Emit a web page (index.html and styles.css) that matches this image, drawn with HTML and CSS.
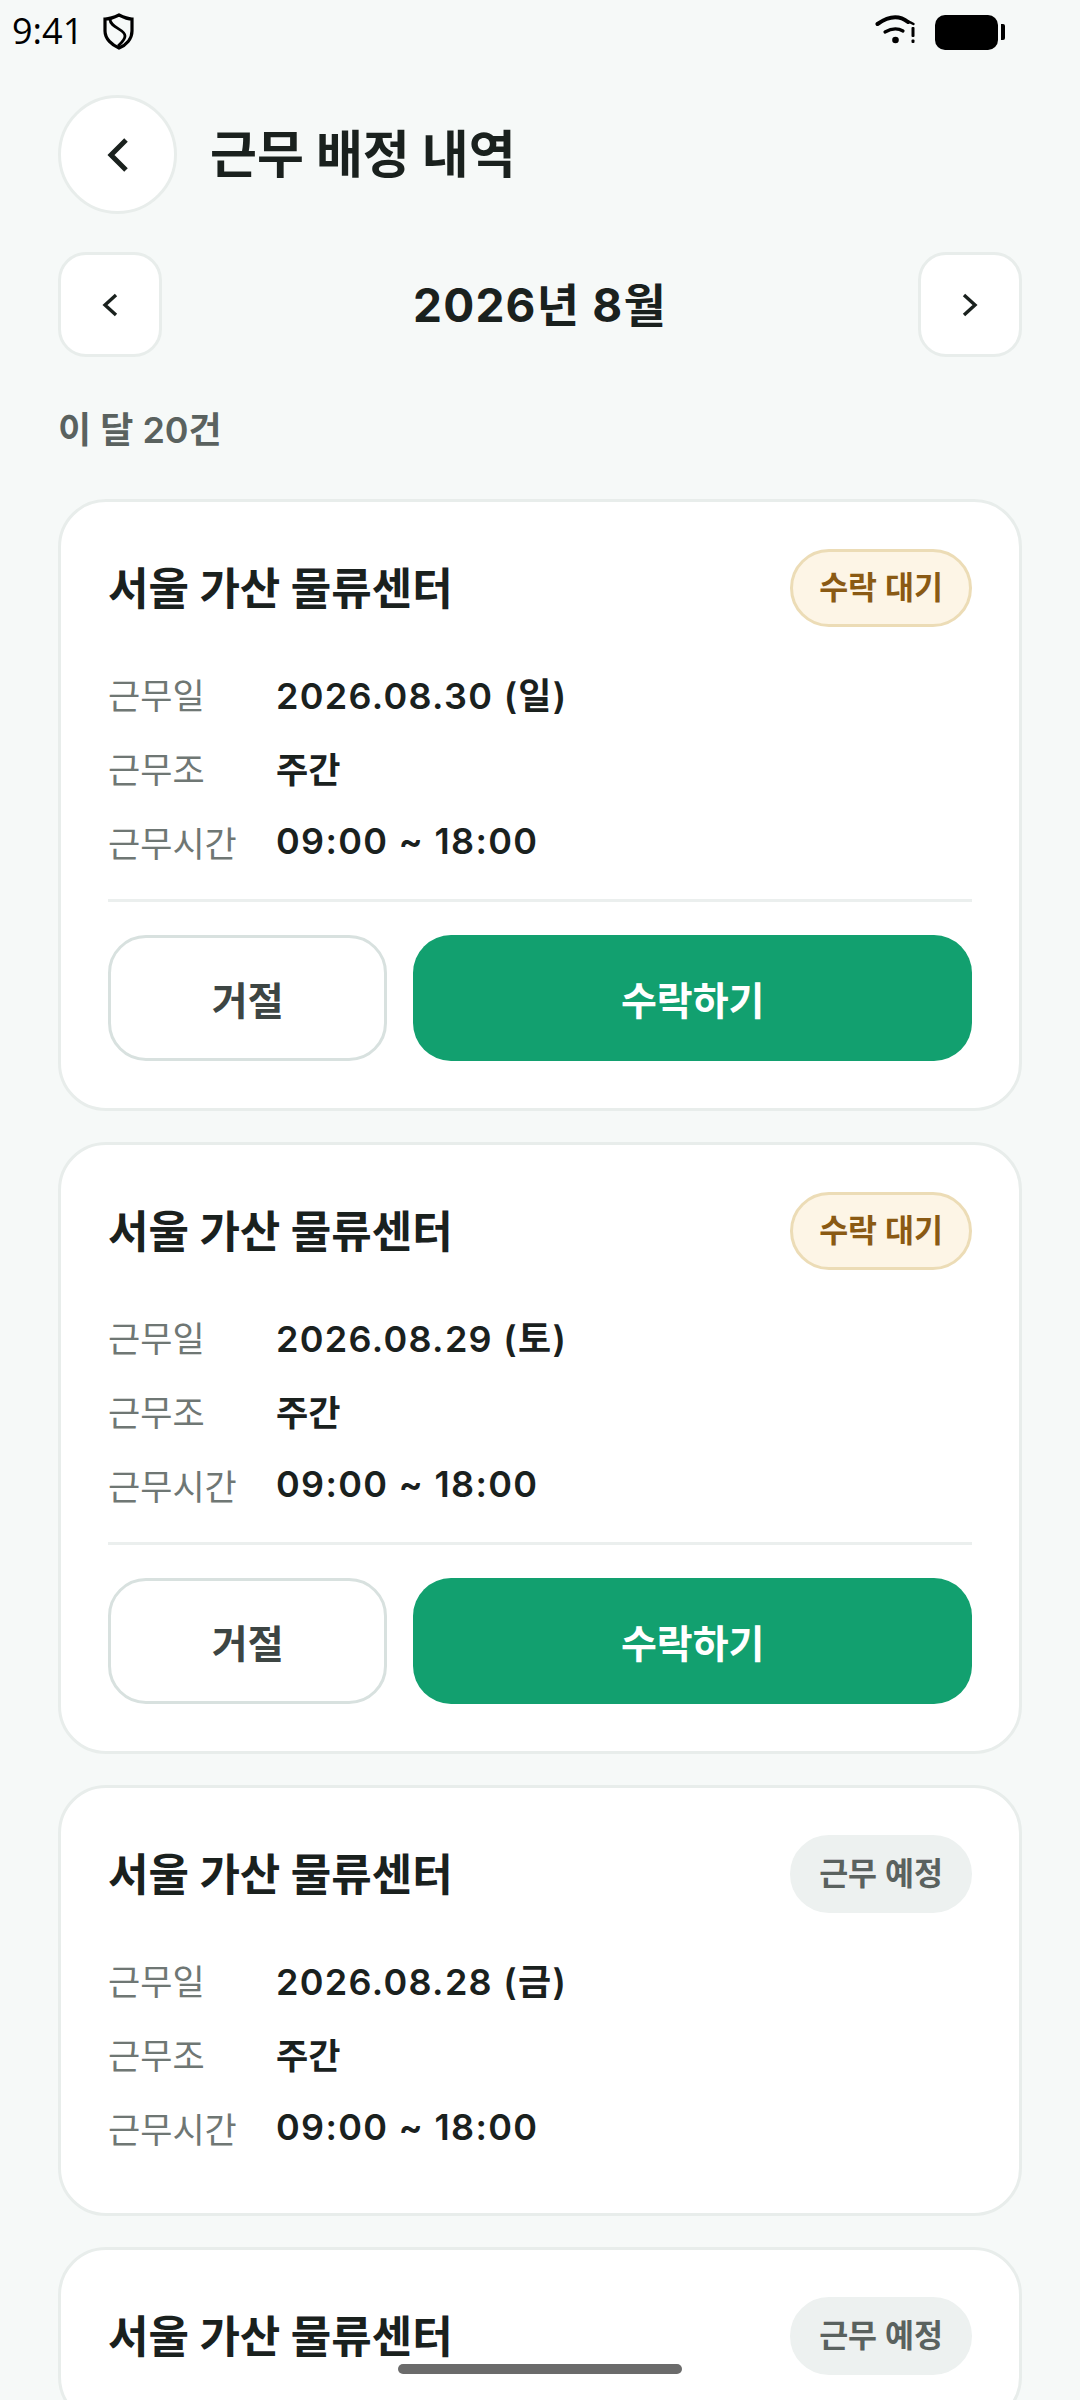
FILE: index.html
```html
<!DOCTYPE html>
<html lang="ko">
<head>
<meta charset="utf-8">
<title>근무 배정 내역</title>
<link rel="stylesheet" href="styles.css">
</head>
<body>
<div class="screen">
  <div class="status">
    <div class="status-left">
      <span class="clock">9:41</span>
      <svg class="shield" viewBox="0 0 40 44" fill="none" stroke="#000" stroke-width="3.2"><path d="M21 6 C25 8 30 10 34 10 V22 C34 30 28 36 21 39 C14 36 7 30 7 22 V10 C12 10 17 8 21 6Z"/><path d="M12 10 C12 19 27 20 27 27 C27 31 23 34 20 37" stroke-width="2.8"/></svg>
    </div>
    <div class="status-right">
      <svg class="wifi" viewBox="0 0 40 30" fill="none" stroke="#000" stroke-linecap="round"><path d="M2.5 9 Q20 -3.5 33 7" stroke-width="4"/><path d="M33 6.5 Q36 7.5 38.5 9" stroke-width="2.4"/><path d="M10 17 Q20 11.5 28 16" stroke-width="3.2"/><circle cx="20.5" cy="25" r="3.3" fill="#000" stroke="none"/><rect x="36.5" y="12" width="3" height="10" rx="1" fill="#000" stroke="none"/><rect x="36.5" y="24.5" width="3" height="3.4" rx="1" fill="#000" stroke="none"/></svg>
      <div class="battery"><span class="battery-body"></span><span class="battery-tip"></span></div>
    </div>
  </div>

  <header class="header">
    <button class="back" type="button" aria-label="뒤로"><svg class="chev-lg" viewBox="0 0 24 36" fill="none" stroke="#1a211e" stroke-width="5"><path d="M20 3 L5 18 L20 33"/></svg></button>
    <h1 class="title">근무 배정 내역</h1>
  </header>

  <div class="month">
    <button class="nav" type="button" aria-label="이전 달"><svg class="chev-sm" viewBox="0 0 16 24" fill="none" stroke="#1a211e" stroke-width="3.4"><path d="M14 2 L3 12 L14 22"/></svg></button>
    <div class="month-label">2026년 8월</div>
    <button class="nav" type="button" aria-label="다음 달"><svg class="chev-sm" viewBox="0 0 16 24" fill="none" stroke="#1a211e" stroke-width="3.4"><path d="M2 2 L13 12 L2 22"/></svg></button>
  </div>

  <div class="count">이 달 20건</div>

  <div class="list">
    <article class="card">
      <div class="card-head"><h2 class="site">서울 가산 물류센터</h2><span class="badge badge-wait">수락 대기</span></div>
      <dl class="rows">
        <div class="row"><dt>근무일</dt><dd class="num">2026.08.30 (일)</dd></div>
        <div class="row"><dt>근무조</dt><dd>주간</dd></div>
        <div class="row"><dt>근무시간</dt><dd class="num">09:00 ~ 18:00</dd></div>
      </dl>
      <div class="actions"><button class="btn btn-ghost" type="button">거절</button><button class="btn btn-primary" type="button">수락하기</button></div>
    </article>
    <article class="card">
      <div class="card-head"><h2 class="site">서울 가산 물류센터</h2><span class="badge badge-wait">수락 대기</span></div>
      <dl class="rows">
        <div class="row"><dt>근무일</dt><dd class="num">2026.08.29 (토)</dd></div>
        <div class="row"><dt>근무조</dt><dd>주간</dd></div>
        <div class="row"><dt>근무시간</dt><dd class="num">09:00 ~ 18:00</dd></div>
      </dl>
      <div class="actions"><button class="btn btn-ghost" type="button">거절</button><button class="btn btn-primary" type="button">수락하기</button></div>
    </article>
    <article class="card">
      <div class="card-head"><h2 class="site">서울 가산 물류센터</h2><span class="badge badge-plan">근무 예정</span></div>
      <dl class="rows">
        <div class="row"><dt>근무일</dt><dd class="num">2026.08.28 (금)</dd></div>
        <div class="row"><dt>근무조</dt><dd>주간</dd></div>
        <div class="row"><dt>근무시간</dt><dd class="num">09:00 ~ 18:00</dd></div>
      </dl>
    </article>
    <article class="card">
      <div class="card-head"><h2 class="site">서울 가산 물류센터</h2><span class="badge badge-plan">근무 예정</span></div>
    </article>
  </div>
  <div class="home"></div>
</div>
</body>
</html>
```

FILE: styles.css
```css
* { box-sizing: border-box; }
html, body { margin: 0; padding: 0; }
body {
  background: #f6f9f8;
  color: #1a211e;
  font-family: Inter, "Noto Sans CJK KR", sans-serif;
}
.screen { position: relative; width: 1080px; height: 2400px; overflow: hidden; }

.status { height: 62px; padding: 12px 75px 0 12px; display: flex; justify-content: space-between; align-items: flex-start; }
.status-left { display: flex; align-items: center; gap: 15px; height: 38px; }
.clock { font-family: "Open Sans", sans-serif; font-size: 36px; line-height: 38px; color: #000; }
.shield { width: 40px; height: 44px; }
.status-right { display: flex; align-items: center; gap: 20px; height: 38px; margin-top: 1px; }
.wifi { width: 40px; height: 30px; margin-top: -4px; }
.battery { display: flex; align-items: center; gap: 3px; }
.battery-body { width: 63px; height: 35px; border-radius: 10px; background: #000; }
.battery-tip { width: 4px; height: 16px; background: #000; border-radius: 0 2px 2px 0; }

.header { display: flex; align-items: center; gap: 33px; margin: 33px 58px 0; height: 119px; }
.back { width: 119px; height: 119px; border-radius: 50%; background: #fff; border: 3px solid #e8edeb; padding: 0; display: flex; align-items: center; justify-content: center; }
.chev-lg { width: 24px; height: 36px; }
.title { margin: 0; font-size: 51px; font-weight: 700; line-height: 60px; }

.month { display: flex; justify-content: space-between; align-items: center; margin: 38px 58px 0; height: 105px; }
.nav { width: 104px; height: 105px; border-radius: 28px; background: #fff; border: 3px solid #e8edeb; padding: 0; display: flex; align-items: center; justify-content: center; }
.chev-sm { width: 16px; height: 24px; }
.month-label { font-size: 46px; font-weight: 700; line-height: 52px; letter-spacing: 1.2px; }

.count { margin: 51px 58px 0; font-size: 36px; line-height: 44px; font-weight: 600; color: #5a625f; }

.list { display: flex; flex-direction: column; gap: 31px; margin: 47px 58px 0; }
.card { display: flex; flex-direction: column; background: #fff; border: 3px solid #e8edeb; border-radius: 48px; padding: 47px; }
.card-head { display: flex; justify-content: space-between; align-items: center; height: 78px; }
.site { margin: 0; padding-top: 2px; font-size: 44px; font-weight: 700; line-height: 56px; }
.badge { height: 78px; padding: 0 26px; border-radius: 39px; font-size: 31.5px; font-weight: 600; line-height: 72px; border: 3px solid transparent; }
.badge-wait { background: #fdf5e6; border-color: #ecdcb6; color: #8a5a14; }
.badge-plan { background: #edf1f0; border-color: #edf1f0; color: #5a625f; }

.rows { margin: 42px 0 15px; display: flex; flex-direction: column; gap: 26px; }
.row { display: flex; align-items: center; height: 48px; }
.row dt { width: 168px; font-size: 35px; color: #6f7774; }
.row dd { margin: 0; font-size: 35px; font-weight: 600; }
.row dd.num { font-size: 36px; letter-spacing: 1.3px; }

.actions { display: grid; grid-template-columns: 1fr 2fr; gap: 26px; margin-top: 19px; padding-top: 33px; border-top: 3px solid #ebefee; }
.btn { height: 126px; border-radius: 38px; font-family: inherit; font-size: 39px; font-weight: 600; padding: 0; }
.btn-ghost { background: #fff; border: 3px solid #d8e1df; color: #3d4543; }
.btn-primary { background: #12a06f; border: 0; color: #fff; }

.home { position: absolute; left: 398px; top: 2364px; width: 284px; height: 10px; background: #6b6b6b; border-radius: 5px; }
```
